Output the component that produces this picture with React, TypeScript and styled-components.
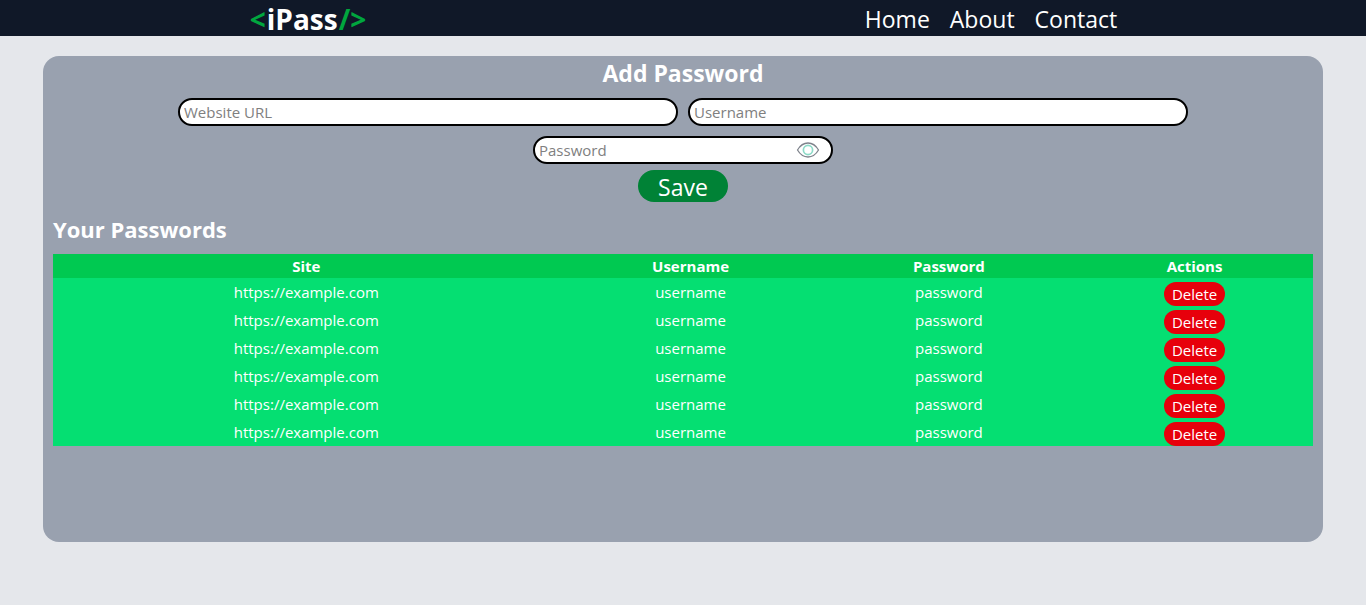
import React, { useState } from "react";
import styled, { createGlobalStyle } from "styled-components";

const GlobalStyle = createGlobalStyle`
  *, *::before, *::after { box-sizing: border-box; }
  body {
    margin: 0;
    min-height: 100vh;
    background: #e5e7eb;
    color: #fff;
    font-family: "Segoe UI", "Open Sans", "Noto Sans", sans-serif;
    font-size: 15px;
    line-height: 24px;
  }
  h1, h2, p { margin: 0; }
  button, input { font: inherit; }
`;

const Header = styled.header`
  display: flex;
  justify-content: space-around;
  align-items: center;
  padding-top: 2px;
  background: #101828;
`;

const Logo = styled.a`
  color: #fff;
  font-size: 28px;
  font-weight: 700;
  line-height: 34px;
  text-decoration: none;
`;

const Accent = styled.span`
  padding: 0 1px;
  color: #00a63e;
`;

const Nav = styled.nav`
  display: flex;
  gap: 20px;
`;

const NavLink = styled.a`
  color: #fff;
  font-size: 23px;
  line-height: 34px;
  text-decoration: none;
`;

const Panel = styled.main`
  max-width: 1280px;
  min-height: calc(80vh + 2px);
  margin: 20px auto;
  padding: 1px 10px;
  border-radius: 16px;
  background: #99a1af;
`;

const Title = styled.h2`
  font-size: 23px;
  font-weight: 700;
  line-height: 32px;
  text-align: center;
`;

const ListTitle = styled(Title)`
  font-size: 22px;
  text-align: left;
`;

const Form = styled.form`
  display: flex;
  flex-direction: column;
  align-items: center;
  margin: 9px 0 11px;
`;

const Fields = styled.div`
  display: flex;
  flex-wrap: wrap;
  justify-content: center;
  gap: 10px;
  width: 100%;
`;

const Field = styled.label<{ $width: number }>`
  display: flex;
  align-items: center;
  width: ${(p) => p.$width}px;
  max-width: 100%;
  height: 28px;
  padding: 0 4px;
  border: 2px solid #000;
  border-radius: 14px;
  background: #fff;
`;

const Input = styled.input`
  flex: 1;
  min-width: 0;
  height: 24px;
  padding: 0;
  border: 0;
  outline: 0;
  background: transparent;
  color: #000;
  &::placeholder { color: #808080; opacity: 1; }
`;

const EyeButton = styled.button`
  display: flex;
  margin-right: 7px;
  padding: 0;
  border: 0;
  background: none;
  cursor: pointer;
`;

const SaveButton = styled.button`
  margin-top: 6px;
  padding: 2px 20px 0;
  border: 0;
  border-radius: 16px;
  background: #008236;
  color: #fff;
  font-size: 23px;
  line-height: 30px;
  cursor: pointer;
`;

const Table = styled.table`
  width: 100%;
  margin-top: 9px;
  border-collapse: collapse;
  table-layout: fixed;
  background: #05df72;
  text-align: center;
`;

const Column = styled.col<{ $share: number }>`
  width: ${(p) => p.$share}%;
`;

const HeadCell = styled.th`
  padding: 0;
  background: #00c951;
  font-weight: 700;
`;

const Cell = styled.td`
  padding: 0;
  vertical-align: middle;
`;

const ActionCell = styled(Cell)`
  padding-top: 4px;
`;

const DeleteButton = styled.button`
  display: block;
  margin: 0 auto;
  padding: 0 8px;
  border: 0;
  border-radius: 12px;
  background: #e7000b;
  color: #fff;
  cursor: pointer;
`;

const EyeIcon = () => (
  <svg width="24" height="18" viewBox="0 0 24 18" fill="none" aria-hidden="true">
    <path
      d="M1.5 9C4.2 4.4 7.7 2 12 2S19.8 4.4 22.5 9C19.8 13.6 16.3 16 12 16S4.2 13.6 1.5 9Z"
      stroke="#7f838c"
      strokeWidth="1.3"
      strokeLinejoin="round"
    />
    <circle cx="12" cy="9" r="4.6" stroke="#8ddbc8" strokeWidth="1.7" />
  </svg>
);

type Entry = { id: number; site: string; username: string; password: string };

const saved: Entry[] = [1, 2, 3, 4, 5, 6].map((id) => ({
  id,
  site: "https://example.com",
  username: "username",
  password: "password",
}));

export default function App() {
  const [entries, setEntries] = useState(saved);
  const [form, setForm] = useState({ site: "", username: "", password: "" });
  const [visible, setVisible] = useState(false);

  const change = (key: keyof typeof form) => (e: React.ChangeEvent<HTMLInputElement>) =>
    setForm({ ...form, [key]: e.target.value });

  const save = (e: React.FormEvent) => {
    e.preventDefault();
    setEntries([...entries, { id: Date.now(), ...form }]);
    setForm({ site: "", username: "", password: "" });
  };

  return (
    <>
      <GlobalStyle />
      <Header>
        <Logo href="#">
          <Accent>&lt;</Accent>iPass<Accent>/&gt;</Accent>
        </Logo>
        <Nav>
          <NavLink href="#home">Home</NavLink>
          <NavLink href="#about">About</NavLink>
          <NavLink href="#contact">Contact</NavLink>
        </Nav>
      </Header>
      <Panel>
        <Title>Add Password</Title>
        <Form onSubmit={save}>
          <Fields>
            <Field $width={500}>
              <Input aria-label="Website URL" placeholder="Website URL" value={form.site} onChange={change("site")} />
            </Field>
            <Field $width={500}>
              <Input aria-label="Username" placeholder="Username" value={form.username} onChange={change("username")} />
            </Field>
            <Field $width={300}>
              <Input
                type={visible ? "text" : "password"}
                aria-label="Password"
                placeholder="Password"
                value={form.password}
                onChange={change("password")}
              />
              <EyeButton type="button" aria-label="Show password" onClick={() => setVisible(!visible)}>
                <EyeIcon />
              </EyeButton>
            </Field>
          </Fields>
          <SaveButton type="submit">Save</SaveButton>
        </Form>
        <ListTitle>Your Passwords</ListTitle>
        <Table>
          <colgroup>
            <Column $share={40.2} />
            <Column $share={20.8} />
            <Column $share={20.2} />
            <Column $share={18.8} />
          </colgroup>
          <thead>
            <tr>
              <HeadCell scope="col">Site</HeadCell>
              <HeadCell scope="col">Username</HeadCell>
              <HeadCell scope="col">Password</HeadCell>
              <HeadCell scope="col">Actions</HeadCell>
            </tr>
          </thead>
          <tbody>
            {entries.map((entry) => (
              <tr key={entry.id}>
                <Cell>{entry.site}</Cell>
                <Cell>{entry.username}</Cell>
                <Cell>{entry.password}</Cell>
                <ActionCell>
                  <DeleteButton type="button" onClick={() => setEntries(entries.filter((x) => x.id !== entry.id))}>
                    Delete
                  </DeleteButton>
                </ActionCell>
              </tr>
            ))}
          </tbody>
        </Table>
      </Panel>
    </>
  );
}
